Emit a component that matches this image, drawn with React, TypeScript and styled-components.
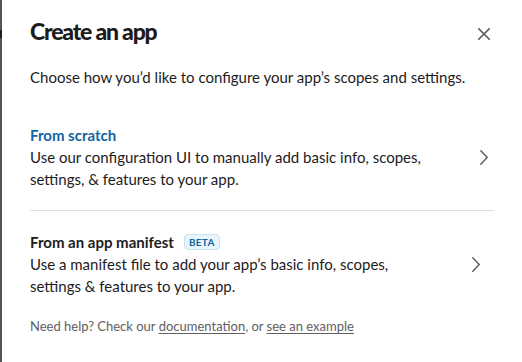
import { createGlobalStyle, styled } from 'styled-components'

const GlobalStyle = createGlobalStyle`
  html, body {
    margin: 0;
    padding: 0;
    background: #ffffff;
  }
  body {
    font-family: Lato, 'Noto Sans', 'Liberation Sans', sans-serif;
    color: #1d1c1d;
    -webkit-font-smoothing: antialiased;
  }
`

type Option = {
  title: string
  description: string
  accent?: boolean
  beta?: boolean
  chevronInset: number
}

const options: Option[] = [
  {
    title: 'From scratch',
    description: 'Use our configuration UI to manually add basic info, scopes, settings, & features to your app.',
    accent: true,
    chevronInset: 6,
  },
  {
    title: 'From an app manifest',
    description: 'Use a manifest file to add your app’s basic info, scopes, settings & features to your app.',
    beta: true,
    chevronInset: 14,
  },
]

const CloseIcon = () => (
  <svg width="12" height="12" viewBox="0 0 12 12" fill="none">
    <path d="M0.6 0.6L11.4 11.4M11.4 0.6L0.6 11.4" stroke="#616061" strokeWidth="1.5" strokeLinecap="round" />
  </svg>
)

const ChevronIcon = () => (
  <svg width="8" height="15" viewBox="0 0 8 15" fill="none">
    <path d="M0.8 0.8L7.2 7.5L0.8 14.2" stroke="#616061" strokeWidth="1.5" strokeLinecap="round" strokeLinejoin="round" />
  </svg>
)

const App = () => {
  return (
    <>
      <GlobalStyle />
      <StyledPage>
        <StyledBackdrop />
        <StyledModal>
          <StyledHeader>
            <StyledTitle>Create an app</StyledTitle>
            <StyledCloseButton aria-label="Close">
              <CloseIcon />
            </StyledCloseButton>
          </StyledHeader>
          <StyledIntro>Choose how you’d like to configure your app’s scopes and settings.</StyledIntro>
          <StyledOptionList>
            {options.map((option) => (
              <StyledOptionRow key={option.title}>
                <StyledOptionText>
                  <StyledOptionTitle $accent={option.accent}>
                    {option.title}
                    {option.beta && <StyledBadge>BETA</StyledBadge>}
                  </StyledOptionTitle>
                  <StyledOptionDescription>{option.description}</StyledOptionDescription>
                </StyledOptionText>
                <StyledChevron $inset={option.chevronInset}>
                  <ChevronIcon />
                </StyledChevron>
              </StyledOptionRow>
            ))}
          </StyledOptionList>
          <StyledFooter>
            Need help? Check our <StyledLink href="#">documentation</StyledLink>, or{' '}
            <StyledLink href="#">see an example</StyledLink>
          </StyledFooter>
        </StyledModal>
      </StyledPage>
    </>
  )
}

const StyledPage = styled.div`
  display: flex;
  width: 522px;
  height: 362px;
  overflow: hidden;
`

const StyledBackdrop = styled.div`
  flex: 0 0 2px;
  background: linear-gradient(
    to bottom,
    #555555 0,
    #555555 30px,
    #1f1f1f 30px,
    #1f1f1f 38px,
    #555555 38px,
    #555555 100%
  );
`

const StyledModal = styled.div`
  flex: 1;
  display: flex;
  flex-direction: column;
  background: #ffffff;
  padding: 16px 28px 0 28px;
`

const StyledHeader = styled.div`
  display: flex;
  justify-content: space-between;
  align-items: flex-start;
`

const StyledTitle = styled.h1`
  margin: 0;
  font-size: 23px;
  line-height: 30px;
  font-weight: 900;
  letter-spacing: -1.2px;
  color: #1d1c1d;
`

const StyledCloseButton = styled.button`
  display: flex;
  margin: 12px 4px 0 0;
  padding: 0;
  border: none;
  background: none;
  cursor: pointer;
`

const StyledIntro = styled.p`
  margin: 20px 0 0;
  font-size: 15px;
  line-height: 22px;
`

const StyledOptionList = styled.div`
  display: flex;
  flex-direction: column;
  margin-top: 16px;
`

const StyledOptionRow = styled.div`
  display: flex;
  align-items: center;
  padding: 20px 0;
  cursor: pointer;

  & + & {
    border-top: 1px solid #dddddd;
  }
`

const StyledOptionText = styled.div`
  width: 412px;
`

const StyledOptionTitle = styled.div<{ $accent?: boolean }>`
  display: flex;
  align-items: center;
  gap: 10px;
  font-size: 15px;
  line-height: 22px;
  font-weight: 700;
  color: ${({ $accent }) => ($accent ? '#1264a3' : '#1d1c1d')};
`

const StyledBadge = styled.span`
  display: inline-flex;
  align-items: center;
  height: 14px;
  padding: 0 4px;
  border: 1px solid #c7e2f1;
  border-radius: 4px;
  background: #e8f5fa;
  color: #1264a3;
  font-size: 10px;
  font-weight: 700;
  letter-spacing: 0.3px;
`

const StyledOptionDescription = styled.div`
  font-size: 15px;
  line-height: 22px;
  color: #1d1c1d;
`

const StyledChevron = styled.div<{ $inset: number }>`
  display: flex;
  flex: 1;
  justify-content: flex-end;
  padding-right: ${({ $inset }) => $inset}px;
`

const StyledFooter = styled.p`
  margin: 0;
  font-size: 13px;
  line-height: 18px;
  color: #616061;
`

const StyledLink = styled.a`
  color: #616061;
  text-decoration: underline;
  text-underline-offset: 2px;
`

export default App
